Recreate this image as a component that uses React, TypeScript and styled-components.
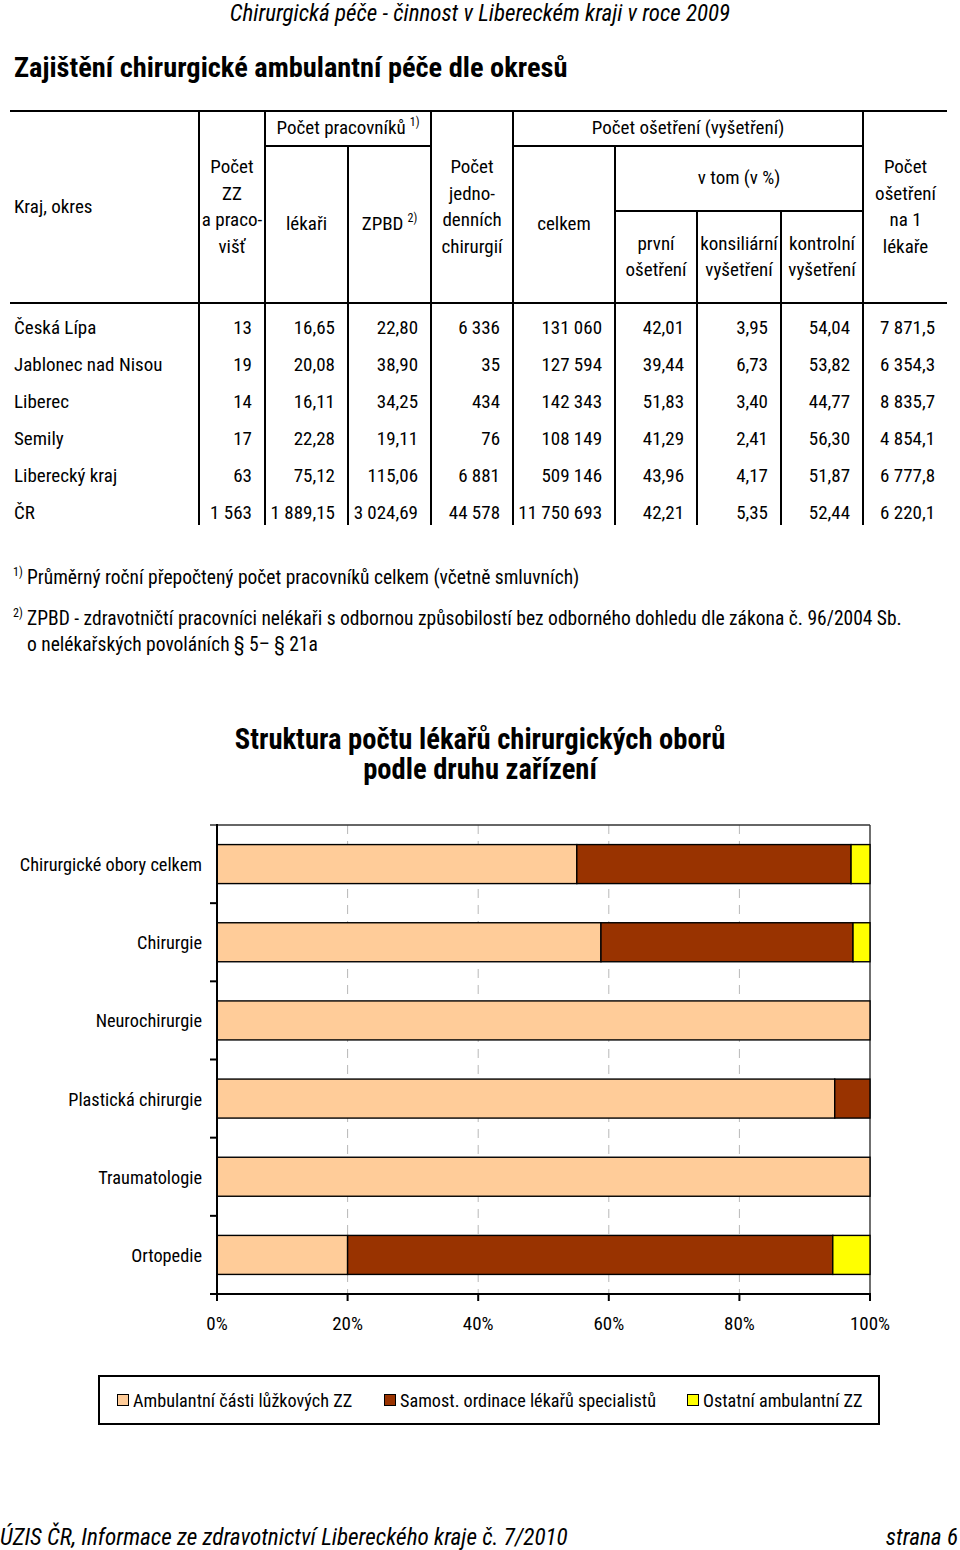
import React from "react";
import styled, { createGlobalStyle } from "styled-components";

const FONT = `"Roboto Condensed", "Liberation Sans Narrow", "Liberation Sans", Arial, sans-serif`;

const Global = createGlobalStyle`
  html, body { margin: 0; padding: 0; background: #fff; }
  body { font-family: ${FONT}; color: #000; }
`;

const Page = styled.div`
  width: 960px;
  height: 1550px;
  display: flex;
  flex-direction: column;
  overflow: hidden;
`;

const RunningHead = styled.div`
  height: 22px;
  line-height: 27px;
  font-size: 23px;
  font-style: italic;
  text-align: center;
`;

const Title = styled.h1`
  margin: 33px 0 0 14px;
  font-size: 28.4px;
  line-height: 26px;
  font-weight: bold;
`;

const Table = styled.table`
  margin: 29px 0 0 10px;
  width: 937px;
  table-layout: fixed;
  border-collapse: collapse;
  border-top: 2px solid #000;
  font-size: 19px;
`;

const Col = styled.col<{ $w: number }>`
  width: ${(p) => p.$w}px;
`;

const Head = styled.thead`
  border-bottom: 2px solid #000;
`;

const Th = styled.th<{ $left?: boolean; $bottom?: boolean; $h?: number; $align?: string }>`
  font-weight: normal;
  line-height: 26.5px;
  padding: 0 1px;
  text-align: ${(p) => p.$align || "center"};
  vertical-align: middle;
  white-space: nowrap;
  height: ${(p) => (p.$h ? `${p.$h}px` : "auto")};
  border-left: ${(p) => (p.$left ? "2px solid #000" : "none")};
  border-bottom: ${(p) => (p.$bottom ? "2px solid #000" : "none")};
`;

const FirstTh = styled(Th)`
  padding-left: 4px;
`;

const Sup = styled.sup`
  font-size: 12px;
  line-height: 0;
  vertical-align: 8px;
  margin-left: 4px;
`;

const Td = styled.td<{ $left?: boolean; $first?: boolean }>`
  box-sizing: border-box;
  height: 37px;
  padding: 0 ${(p) => (p.$first ? "0" : "12px")} 1px ${(p) => (p.$first ? "4px" : "0")};
  line-height: 22px;
  vertical-align: bottom;
  white-space: nowrap;
  text-align: ${(p) => (p.$first ? "left" : "right")};
  border-left: ${(p) => (p.$left ? "2px solid #000" : "none")};
`;

const Notes = styled.div`
  margin: 40px 0 0 13px;
  font-size: 19.5px;
  line-height: 26px;
`;

const Note = styled.p<{ $gap?: number }>`
  margin: ${(p) => p.$gap || 0}px 0 0 0;
  padding-left: 14px;
  position: relative;
  white-space: nowrap;
`;

const NoteMark = styled.span`
  position: absolute;
  left: 0;
  top: -6px;
  font-size: 12px;
`;

const ChartTitle = styled.h2`
  margin: 66px 0 0 0;
  text-align: center;
  font-size: 28.6px;
  line-height: 30px;
  font-weight: bold;
`;

const ChartBox = styled.div`
  margin-top: 31px;
  height: 530px;
`;

const Legend = styled.div`
  margin: 30px 0 0 98px;
  width: 782px;
  height: 50px;
  box-sizing: border-box;
  border: 2px solid #000;
  display: flex;
  align-items: center;
  padding-left: 17px;
  font-size: 18.2px;
`;

const LegendItem = styled.div<{ $w: number }>`
  display: flex;
  align-items: center;
  width: ${(p) => p.$w}px;
  white-space: nowrap;
`;

const Swatch = styled.span<{ $c: string }>`
  width: 10px;
  height: 10px;
  border: 1.5px solid #000;
  background: ${(p) => p.$c};
  margin-right: 4px;
  flex: none;
`;

const Footer = styled.div`
  margin-top: 100px;
  height: 24px;
  line-height: 24px;
  font-size: 23.2px;
  font-style: italic;
  display: flex;
  justify-content: space-between;
  padding-right: 2px;
`;

const widths = [189, 66, 83, 83, 82, 102, 82, 84, 82, 84];

const rows = [
  ["Česká Lípa", "13", "16,65", "22,80", "6 336", "131 060", "42,01", "3,95", "54,04", "7 871,5"],
  ["Jablonec nad Nisou", "19", "20,08", "38,90", "35", "127 594", "39,44", "6,73", "53,82", "6 354,3"],
  ["Liberec", "14", "16,11", "34,25", "434", "142 343", "51,83", "3,40", "44,77", "8 835,7"],
  ["Semily", "17", "22,28", "19,11", "76", "108 149", "41,29", "2,41", "56,30", "4 854,1"],
  ["Liberecký kraj", "63", "75,12", "115,06", "6 881", "509 146", "43,96", "4,17", "51,87", "6 777,8"],
  ["ČR", "1 563", "1 889,15", "3 024,69", "44 578", "11 750 693", "42,21", "5,35", "52,44", "6 220,1"],
];

const COLORS = ["#FFCC99", "#993300", "#FFFF00"];

const cats = [
  { label: "Chirurgické obory celkem", v: [55.1, 42.0, 2.9] },
  { label: "Chirurgie", v: [58.8, 38.6, 2.6] },
  { label: "Neurochirurgie", v: [100, 0, 0] },
  { label: "Plastická chirurgie", v: [94.6, 5.4, 0] },
  { label: "Traumatologie", v: [100, 0, 0] },
  { label: "Ortopedie", v: [20.0, 74.3, 5.7] },
];

function Chart() {
  const L = 217;
  const R = 870;
  const T = 10;
  const B = 479;
  const W = R - L;
  const band = (B - T) / cats.length;
  const barH = 39;
  const ticks = [0, 20, 40, 60, 80, 100];
  return (
    <svg width="960" height="530" viewBox="0 0 960 530" style={{ display: "block" }}>
      {ticks.slice(1, 5).map((t) => (
        <line key={t} x1={L + (W * t) / 100} x2={L + (W * t) / 100} y1={T} y2={B} stroke="#b8b8b8" strokeWidth="1" strokeDasharray="9 7" />
      ))}
      <line x1={210} x2={R} y1={T} y2={T} stroke="#333" strokeWidth="1.4" />
      <line x1={R} x2={R} y1={T} y2={B} stroke="#333" strokeWidth="1.4" />
      {cats.map((c, i) => {
        const y = T + band * i + (band - barH) / 2;
        let acc = 0;
        return (
          <g key={c.label}>
            {c.v.map((v, k) => {
              const x = L + (W * acc) / 100;
              acc += v;
              if (v <= 0) return null;
              return <rect key={k} x={x} y={y} width={(W * v) / 100} height={barH} fill={COLORS[k]} stroke="#000" strokeWidth="1.4" />;
            })}
            <text x={202} y={y + barH / 2 + 7} textAnchor="end" fontSize="18.3" fontFamily={FONT} fill="#000">
              {c.label}
            </text>
          </g>
        );
      })}
      {cats.map((_, i) => (
        <line key={i} x1={210} x2={L} y1={T + band * (i + 1)} y2={T + band * (i + 1)} stroke="#000" strokeWidth="2" />
      ))}
      <line x1={L} x2={L} y1={T - 1} y2={B + 1} stroke="#000" strokeWidth="2" />
      <line x1={210} x2={R + 1} y1={B} y2={B} stroke="#000" strokeWidth="2" />
      {ticks.map((t) => (
        <g key={t}>
          <line x1={L + (W * t) / 100} x2={L + (W * t) / 100} y1={B} y2={B + 7} stroke="#000" strokeWidth="2" />
          <text x={L + (W * t) / 100} y={B + 36} textAnchor="middle" fontSize="19" fontFamily={FONT} fill="#000">
            {t}%
          </text>
        </g>
      ))}
    </svg>
  );
}

export default function App() {
  return (
    <Page>
      <Global />
      <RunningHead>Chirurgická péče - činnost v Libereckém kraji v roce 2009</RunningHead>
      <Title>Zajištění chirurgické ambulantní péče dle okresů</Title>
      <Table>
        <colgroup>
          {widths.map((w, i) => (
            <Col key={i} $w={w} />
          ))}
        </colgroup>
        <Head>
          <tr>
            <FirstTh rowSpan={3} $align="left">Kraj, okres</FirstTh>
            <Th rowSpan={3} $left>
              Počet<br />ZZ<br />a praco-<br />višť
            </Th>
            <Th colSpan={2} $left $bottom $h={33}>
              Počet pracovníků<Sup>1)</Sup>
            </Th>
            <Th rowSpan={3} $left>
              Počet<br />jedno-<br />denních<br />chirurgií
            </Th>
            <Th colSpan={4} $left $bottom $h={33}>
              Počet ošetření (vyšetření)
            </Th>
            <Th rowSpan={3} $left>
              Počet<br />ošetření<br />na 1<br />lékaře
            </Th>
          </tr>
          <tr>
            <Th rowSpan={2} $left>lékaři</Th>
            <Th rowSpan={2} $left>
              ZPBD<Sup>2)</Sup>
            </Th>
            <Th rowSpan={2} $left>celkem</Th>
            <Th colSpan={3} $left $bottom $h={63}>
              v tom (v %)
            </Th>
          </tr>
          <tr>
            <Th $left $h={90}>
              první<br />ošetření
            </Th>
            <Th $left>
              konsiliární<br />vyšetření
            </Th>
            <Th $left>
              kontrolní<br />vyšetření
            </Th>
          </tr>
        </Head>
        <tbody>
          {rows.map((r) => (
            <tr key={r[0]}>
              {r.map((c, i) => (
                <Td key={i} $first={i === 0} $left={i > 0}>
                  {c}
                </Td>
              ))}
            </tr>
          ))}
        </tbody>
      </Table>
      <Notes>
        <Note>
          <NoteMark>1)</NoteMark>Průměrný roční přepočtený počet pracovníků celkem (včetně smluvních)
        </Note>
        <Note $gap={15}>
          <NoteMark>2)</NoteMark>ZPBD - zdravotničtí pracovníci nelékaři s odbornou způsobilostí bez odborného dohledu dle zákona č. 96/2004 Sb.
          <br />o nelékařských povoláních § 5– § 21a
        </Note>
      </Notes>
      <ChartTitle>
        Struktura počtu lékařů chirurgických oborů
        <br />
        podle druhu zařízení
      </ChartTitle>
      <ChartBox>
        <Chart />
      </ChartBox>
      <Legend>
        <LegendItem $w={267}>
          <Swatch $c={COLORS[0]} />Ambulantní části lůžkových ZZ
        </LegendItem>
        <LegendItem $w={303}>
          <Swatch $c={COLORS[1]} />Samost. ordinace lékařů specialistů
        </LegendItem>
        <LegendItem $w={180}>
          <Swatch $c={COLORS[2]} />Ostatní ambulantní ZZ
        </LegendItem>
      </Legend>
      <Footer>
        <span>ÚZIS ČR, Informace ze zdravotnictví Libereckého kraje č. 7/2010</span>
        <span>strana 6</span>
      </Footer>
    </Page>
  );
}
